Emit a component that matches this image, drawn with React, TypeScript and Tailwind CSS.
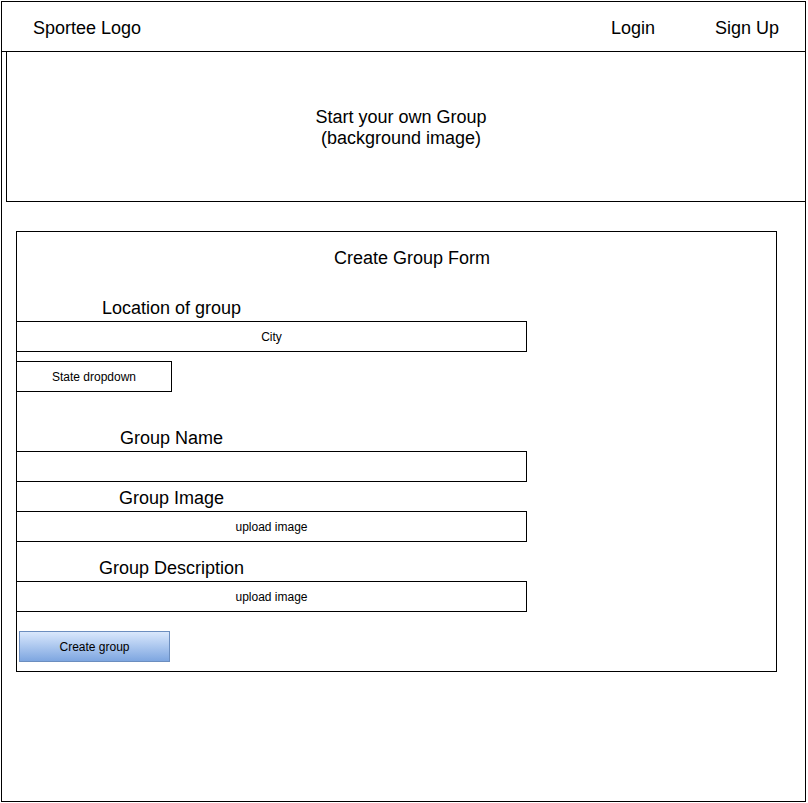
const FONT = "font-['Liberation_Sans',Arial,sans-serif]";

function FieldLabel({ text, mt }: { text: string; mt: string }) {
  return (
    <div className={`-ml-px w-[311px] text-center text-[18px] leading-[20px] ${mt}`}>{text}</div>
  );
}

function FieldBox({ text, mt, width = "w-[511px]" }: { text?: string; mt: string; width?: string }) {
  return (
    <div
      className={`-ml-px flex h-[31px] items-center justify-center border border-black text-[12px] ${width} ${mt}`}
    >
      {text}
    </div>
  );
}

export default function App() {
  return (
    <div className={`bg-white pl-px pt-px text-black ${FONT}`}>
      <div className="box-border flex h-[801px] w-[805px] flex-col border border-black">
        <header className="box-border flex h-[50px] shrink-0 border-b border-black pl-[31px] pr-[26px] pt-[16px] text-[18px] leading-[20px]">
          <span>Sportee Logo</span>
          <span className="ml-auto">Login</span>
          <span className="ml-[60px]">Sign Up</span>
        </header>

        <section className="ml-[4px] box-border flex h-[150px] shrink-0 flex-col items-center border-b border-l border-black pr-[10px] pt-[55px] text-[18px] leading-[21px]">
          <span>Start your own Group</span>
          <span>(background image)</span>
        </section>

        <form
          className="ml-[14px] mt-[29px] box-border flex h-[441px] w-[761px] flex-col border border-black"
          onSubmit={(e) => e.preventDefault()}
        >
          <div className="ml-[317px] mt-[16px] text-[18px] leading-[20px]">Create Group Form</div>

          <FieldLabel text="Location of group" mt="mt-[30px]" />
          <FieldBox text="City" mt="mt-[3px]" />
          <FieldBox text="State dropdown" mt="mt-[9px]" width="w-[156px]" />

          <FieldLabel text="Group Name" mt="mt-[36px]" />
          <FieldBox mt="mt-[3px]" />

          <FieldLabel text="Group Image" mt="mt-[6px]" />
          <FieldBox text="upload image" mt="mt-[3px]" />

          <FieldLabel text="Group Description" mt="mt-[16px]" />
          <FieldBox text="upload image" mt="mt-[3px]" />

          <button
            type="submit"
            className="ml-[2px] mt-[19px] box-border flex h-[31px] w-[151px] items-center justify-center border border-[#6c8ebf] bg-gradient-to-b from-[#dae8fc] to-[#7ea6e0] text-[12px]"
          >
            Create group
          </button>
        </form>
      </div>
    </div>
  );
}
